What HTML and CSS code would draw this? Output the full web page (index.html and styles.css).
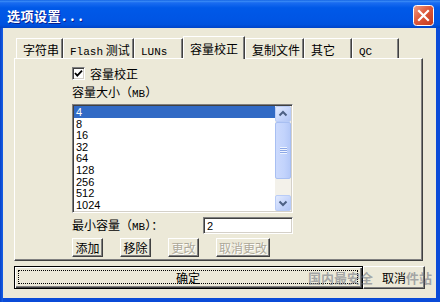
FILE: index.html
```html
<!DOCTYPE html>
<html>
<head>
<meta charset="utf-8">
<link rel="stylesheet" href="styles.css">
</head>
<body>
<div class="window">
  <div class="titlebar">
    <span class="title">选项设置<span class="dots">...</span></span>
    <span class="close">
      <svg width="21" height="21" viewBox="0 0 21 21">
        <defs>
          <linearGradient id="cg" x1="0" y1="0" x2="1" y2="1">
            <stop offset="0" stop-color="#F0A08A"/>
            <stop offset="0.45" stop-color="#DE5A3C"/>
            <stop offset="1" stop-color="#C2381C"/>
          </linearGradient>
        </defs>
        <rect x="0.5" y="0.5" width="20" height="20" rx="3" fill="url(#cg)" stroke="#FFFFFF"/>
        <path d="M6 6 L15 15 M15 6 L6 15" stroke="#FFFFFF" stroke-width="2.2" stroke-linecap="square"/>
      </svg>
    </span>
  </div>
  <div class="frame">
    <div class="client">
      <div class="tabs">
        <div class="tab">字符串</div>
        <div class="tab"><span class="en">Flash</span> 测试</div>
        <div class="tab"><span class="en">LUNs</span></div>
        <div class="tab active">容量校正</div>
        <div class="tab">复制文件</div>
        <div class="tab">其它</div>
        <div class="tab"><span class="en">QC</span></div>
      </div>
      <div class="panel">
        <div class="check">
          <span class="box">
            <svg width="9" height="9" viewBox="0 0 9 9"><path d="M1 4 L3.3 6.6 L8 1.6" fill="none" stroke="#000" stroke-width="1.8"/></svg>
          </span>
          <span>容量校正</span>
        </div>
        <div class="label">容量大小（<span class="en">MB</span>）</div>
        <div class="listbox">
          <div class="items">
            <div class="item sel">4</div>
            <div class="item">8</div>
            <div class="item">16</div>
            <div class="item">32</div>
            <div class="item">64</div>
            <div class="item">128</div>
            <div class="item">256</div>
            <div class="item">512</div>
            <div class="item">1024</div>
          </div>
          <div class="scrollbar">
            <div class="sbtn">
              <svg width="14" height="14" viewBox="0 0 14 14"><path d="M3.5 8.5 L7 5 L10.5 8.5" fill="none" stroke="#4D6185" stroke-width="2"/></svg>
            </div>
            <div class="thumb"><span class="grip"></span></div>
            <div class="track"></div>
            <div class="sbtn">
              <svg width="14" height="14" viewBox="0 0 14 14"><path d="M3.5 5.5 L7 9 L10.5 5.5" fill="none" stroke="#4D6185" stroke-width="2"/></svg>
            </div>
          </div>
        </div>
        <div class="minrow">
          <span>最小容量（<span class="en">MB</span>）：</span>
          <div class="input">2</div>
        </div>
        <div class="btnrow">
          <div class="btn w31">添加</div>
          <div class="btn w31">移除</div>
          <div class="btn w31 disabled">更改</div>
          <div class="btn w54 disabled">取消更改</div>
        </div>
      </div>
      <div class="footer">
        <div class="btn ok"><div class="focus">确定</div></div>
        <div class="btn cancel">取消</div>
      </div>
    </div>
  </div>
  <div class="watermark"><span>国内最安全</span><span class="wm2">件站</span></div>
</div>
</body>
</html>
```

FILE: styles.css
```css
* { box-sizing: border-box; }
html, body { margin: 0; padding: 0; }
body {
  width: 440px;
  height: 302px;
  overflow: hidden;
  font-family: "Noto Sans CJK SC", "Liberation Sans", sans-serif;
  font-size: 12px;
  line-height: 13px;
  color: #000;
}
.en { font-family: "Liberation Mono", "Noto Sans CJK SC", monospace; font-size: 11px; }

.window {
  position: relative;
  width: 440px;
  height: 302px;
  display: flex;
  flex-direction: column;
  background: #0A4BD8;
}
.titlebar {
  height: 28px;
  flex: none;
  display: flex;
  justify-content: space-between;
  align-items: flex-start;
  padding: 0 6px 0 7px;
  background: linear-gradient(#0A5AE0 0%, #3B8CF6 4%, #1A6CF0 10%, #0059E8 28%, #0055E4 70%, #0052DE 88%, #0044C8 100%);
}
.title {
  margin-top: 8px;
  color: #fff;
  font-weight: bold;
  font-size: 13px;
  line-height: 16px;
  letter-spacing: 0.5px;
  text-shadow: 1px 1px #0A1E8F;
}
.dots { letter-spacing: 4px; margin-left: 1px; }
.close { margin-top: 5px; width: 21px; height: 21px; display: block; }
.close svg { display: block; }

.frame {
  flex: 1;
  display: flex;
  padding: 0 4px 4px 3px;
  background: linear-gradient(90deg, #0842C8 0, #1660E6 3px, #0A4BD8 3px);
}
.client {
  flex: 1;
  background: #ECE9D8;
  padding: 8px 0 0 11px;
  display: flex;
  flex-direction: column;
}

.tabs {
  display: flex;
  align-items: flex-end;
  height: 22px;
  margin-left: 2px;
}
.tab {
  position: relative;
  height: 20px;
  padding: 4px 0 0 6px;
  border-top: 1px solid #fff;
  border-left: 1px solid #fff;
  border-right: 1px solid #404040;
  box-shadow: inset -1px 0 #808080;
  white-space: nowrap;
  background: #ECE9D8;
}
.tab:nth-child(1) { width: 47px; }
.tab:nth-child(2) { width: 71px; }
.tab:nth-child(3) { width: 49px; }
.tab:nth-child(4) { width: 62px; }
.tab:nth-child(5) { width: 59px; }
.tab:nth-child(6) { width: 48px; }
.tab:nth-child(7) { width: 47px; }
.tab.active {
  height: 23px;
  margin-bottom: -1px;
  padding-top: 5px;
  z-index: 2;
}

.panel {
  width: 409px;
  height: 203px;
  flex: none;
  border: 1px solid;
  border-color: #fff #404040 #404040 #fff;
  box-shadow: inset -1px -1px #808080;
  padding: 8px 0 0 57px;
  display: flex;
  flex-direction: column;
}
.check {
  display: flex;
  align-items: center;
  gap: 5px;
  height: 13px;
}
.box {
  width: 13px;
  height: 13px;
  background: #fff;
  border: 1px solid;
  border-color: #808080 #fff #fff #808080;
  box-shadow: inset 1px 1px #404040, inset -1px -1px #D4D0C8;
  display: flex;
  align-items: center;
  justify-content: center;
}
.box svg { display: block; }
.label { margin-top: 5px; height: 13px; }

.listbox {
  margin-top: 6px;
  width: 221px;
  height: 109px;
  display: flex;
  border: 1px solid;
  border-color: #808080 #fff #fff #808080;
  box-shadow: inset 1px 1px #404040, inset -1px -1px #D4D0C8;
  padding: 1px;
  background: #fff;
}
.items {
  flex: 1;
  overflow: hidden;
  background: #fff;
}
.item {
  height: 11.6px;
  line-height: 12px;
  padding-left: 2px;
  font-family: "Liberation Sans", sans-serif;
  font-size: 11px;
}
.item.sel { background: #316AC5; color: #fff; }

.scrollbar {
  width: 16px;
  display: flex;
  flex-direction: column;
  background: #F3F1EA;
}
.sbtn {
  height: 16px;
  flex: none;
  border: 1px solid #B9CCF7;
  border-radius: 2px;
  background: linear-gradient(135deg, #E2EAFE, #C4D4FB 60%, #B2C6F5);
  display: flex;
  align-items: center;
  justify-content: center;
}
.sbtn svg { display: block; }
.thumb {
  height: 57px;
  flex: none;
  border: 1px solid #A8BFF2;
  border-radius: 2px;
  background: linear-gradient(90deg, #CCDAFD, #C2D3FC 60%, #B5C9F8);
  display: flex;
  align-items: center;
  justify-content: center;
}
.grip {
  width: 7px;
  height: 7px;
  background: repeating-linear-gradient(#EEF4FF 0 1px, #8CA7E6 1px 2px);
}
.track { flex: 1; }

.minrow {
  margin-top: 4px;
  width: 221px;
  height: 17px;
  display: flex;
  align-items: center;
  justify-content: space-between;
}
.input {
  width: 90px;
  height: 17px;
  background: #fff;
  border: 1px solid;
  border-color: #808080 #fff #fff #808080;
  box-shadow: inset 1px 1px #404040, inset -1px -1px #D4D0C8;
  padding: 2px 0 0 3px;
  font-family: "Liberation Sans", sans-serif;
  font-size: 11px;
  line-height: 12px;
}

.btnrow {
  margin-top: 4px;
  display: flex;
  gap: 17px;
}
.btn {
  height: 19px;
  background: #ECE9D8;
  border: 1px solid;
  border-color: #fff #404040 #404040 #fff;
  box-shadow: inset -1px -1px #808080;
  display: flex;
  align-items: center;
  justify-content: center;
  white-space: nowrap;
}
.w31 { width: 31px; }
.w54 { width: 54px; }
.btn.disabled { color: #ACA899; text-shadow: 1px 1px #fff; }

.footer {
  margin-top: 5px;
  width: 411px;
  display: flex;
}
.btn.ok {
  width: 349px;
  height: 23px;
  border: 1px solid #000;
  box-shadow: inset 1px 1px #fff, inset -1px -1px #404040, inset -2px -2px #808080;
  padding: 3px 4px 4px 3px;
}
.focus {
  flex: 1;
  align-self: stretch;
  border: 1px dotted #000;
  display: flex;
  align-items: center;
  justify-content: center;
}
.btn.cancel {
  width: 62px;
  height: 23px;
}

.watermark {
  position: absolute;
  left: 308px;
  top: 271px;
  display: flex;
  font-size: 13px;
  line-height: 14px;
  font-weight: bold;
  color: rgba(100, 105, 120, 0.55);
  letter-spacing: 0;
  pointer-events: none;
}
.wm2 { margin-left: 33px; }
```
